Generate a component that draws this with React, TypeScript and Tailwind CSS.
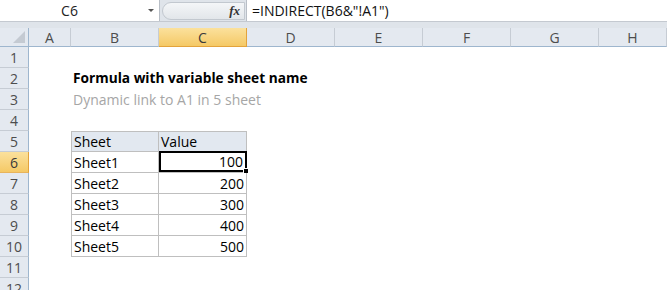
import React from "react";

const cols = ["A", "B", "C", "D", "E", "F", "G", "H"];
const widths = ["w-[42px]", "w-[88px]", "w-[88px]", "w-[88px]", "w-[88px]", "w-[88px]", "w-[88px]", "flex-1"];
const rows = [
  ["Sheet1", "100"],
  ["Sheet2", "200"],
  ["Sheet3", "300"],
  ["Sheet4", "400"],
  ["Sheet5", "500"],
];

function RowHead({ n, active }: { n: number; active?: boolean }) {
  return (
    <div
      className={
        "flex h-[21px] w-[29px] shrink-0 items-center justify-center border-r border-b " +
        (active
          ? "border-r-[#e3a33c] border-b-[#e8b45c] bg-gradient-to-b from-[#fbe19c] to-[#f5c965] text-[#3a3a3a]"
          : "border-r-[#9eb6ce] border-b-[#c6ccd4] bg-[#e4e9f0] text-[#4d4d4d]")
      }
    >
      {n}
    </div>
  );
}

export default function App() {
  return (
    <div className="h-[290px] w-[667px] overflow-hidden bg-white text-[14px] text-black [font-family:'Open_Sans',sans-serif]">
      {/* formula bar */}
      <div className="flex h-[22px] border-b border-[#c4c9d0] bg-[#dfe4ea]">
        <div className="relative flex w-[160px] items-center justify-center border-r border-[#b8bec6] bg-white pr-[20px]">
          <span className="text-[14px] text-[#222]">C6</span>
          <span className="absolute right-[5px] top-[9px] h-0 w-0 border-x-[3px] border-t-[3px] border-x-transparent border-t-[#555]" />
        </div>
        <div className="flex w-[86px] items-center pl-[2px]">
          <div className="flex h-[18px] w-[83px] items-center justify-end rounded-l-full border border-[#c2c8cf] bg-gradient-to-b from-[#f4f6f8] to-[#e2e6ea] pr-[4px]">
            <span className="text-[13px] italic font-bold text-[#333] [font-family:'Liberation_Serif',serif]">fx</span>
          </div>
        </div>
        <div className="flex flex-1 items-center border-l border-[#b8bec6] bg-white pl-[5px] text-[14px] text-[#111]">
          =INDIRECT(B6&amp;"!A1")
        </div>
      </div>
      <div className="h-[6px] bg-[#dfe4ea]" />

      {/* column headers */}
      <div className="flex h-[19px]">
        <div className="relative w-[29px] shrink-0 border-r border-b border-[#9eb6ce] bg-[#e4e9f0]">
          <span className="absolute bottom-[3px] right-[3px] h-0 w-0 border-l-[12px] border-t-[12px] border-l-transparent border-t-transparent border-b-0 [border-right:12px_solid_#c4cad2]" />
        </div>
        {cols.map((c, i) => (
          <div
            key={c}
            className={
              widths[i] +
              " flex shrink-0 items-center justify-center border-r border-b " +
              (c === "C"
                ? "border-r-[#e3a33c] border-b-[#e3a33c] bg-gradient-to-b from-[#fbe19c] to-[#f5c965] text-[#3a3a3a]"
                : "border-r-[#c6ccd4] border-b-[#9eb6ce] bg-[#e4e9f0] text-[#4d4d4d]")
            }
          >
            {c}
          </div>
        ))}
      </div>

      {/* rows 1-4 */}
      <RowHead n={1} />
      <div className="flex">
        <RowHead n={2} />
        <div className="flex h-[21px] items-center pl-[44px] text-[13.7px] font-bold">Formula with variable sheet name</div>
      </div>
      <div className="flex">
        <RowHead n={3} />
        <div className="flex h-[21px] items-center pl-[44px] text-[#a6a6a6]">Dynamic link to A1 in 5 sheet</div>
      </div>
      <RowHead n={4} />

      {/* table */}
      <div className="flex">
        <div className="flex flex-col">
          {[5, 6, 7, 8, 9, 10, 11, 12].map((n) => (
            <RowHead key={n} n={n} active={n === 6} />
          ))}
        </div>
        <div className="pl-[42px]">
          <div className="flex h-[21px] border-b border-[#bfbfbf] bg-[#e2e8f0]">
            <div className="flex w-[88px] items-center border-l border-r border-t border-[#bfbfbf] pl-[2px]">Sheet</div>
            <div className="flex w-[88px] items-center border-r border-t border-[#bfbfbf] pl-[2px]">Value</div>
          </div>
          {rows.map(([s, v], i) => (
            <div key={s} className="flex h-[21px] border-b border-[#bfbfbf]">
              <div className="flex w-[88px] items-center border-l border-r border-[#bfbfbf] pl-[2px]">{s}</div>
              <div
                className={
                  "relative flex w-[88px] items-center justify-end pr-[2px] " +
                  (i === 0 ? "-mt-px h-[21px] border-2 border-black" : "border-r border-[#bfbfbf]")
                }
              >
                {v}
                {i === 0 && <span className="absolute -bottom-[4px] -right-[4px] h-[6px] w-[6px] border border-white bg-black" />}
              </div>
            </div>
          ))}
        </div>
      </div>
    </div>
  );
}
